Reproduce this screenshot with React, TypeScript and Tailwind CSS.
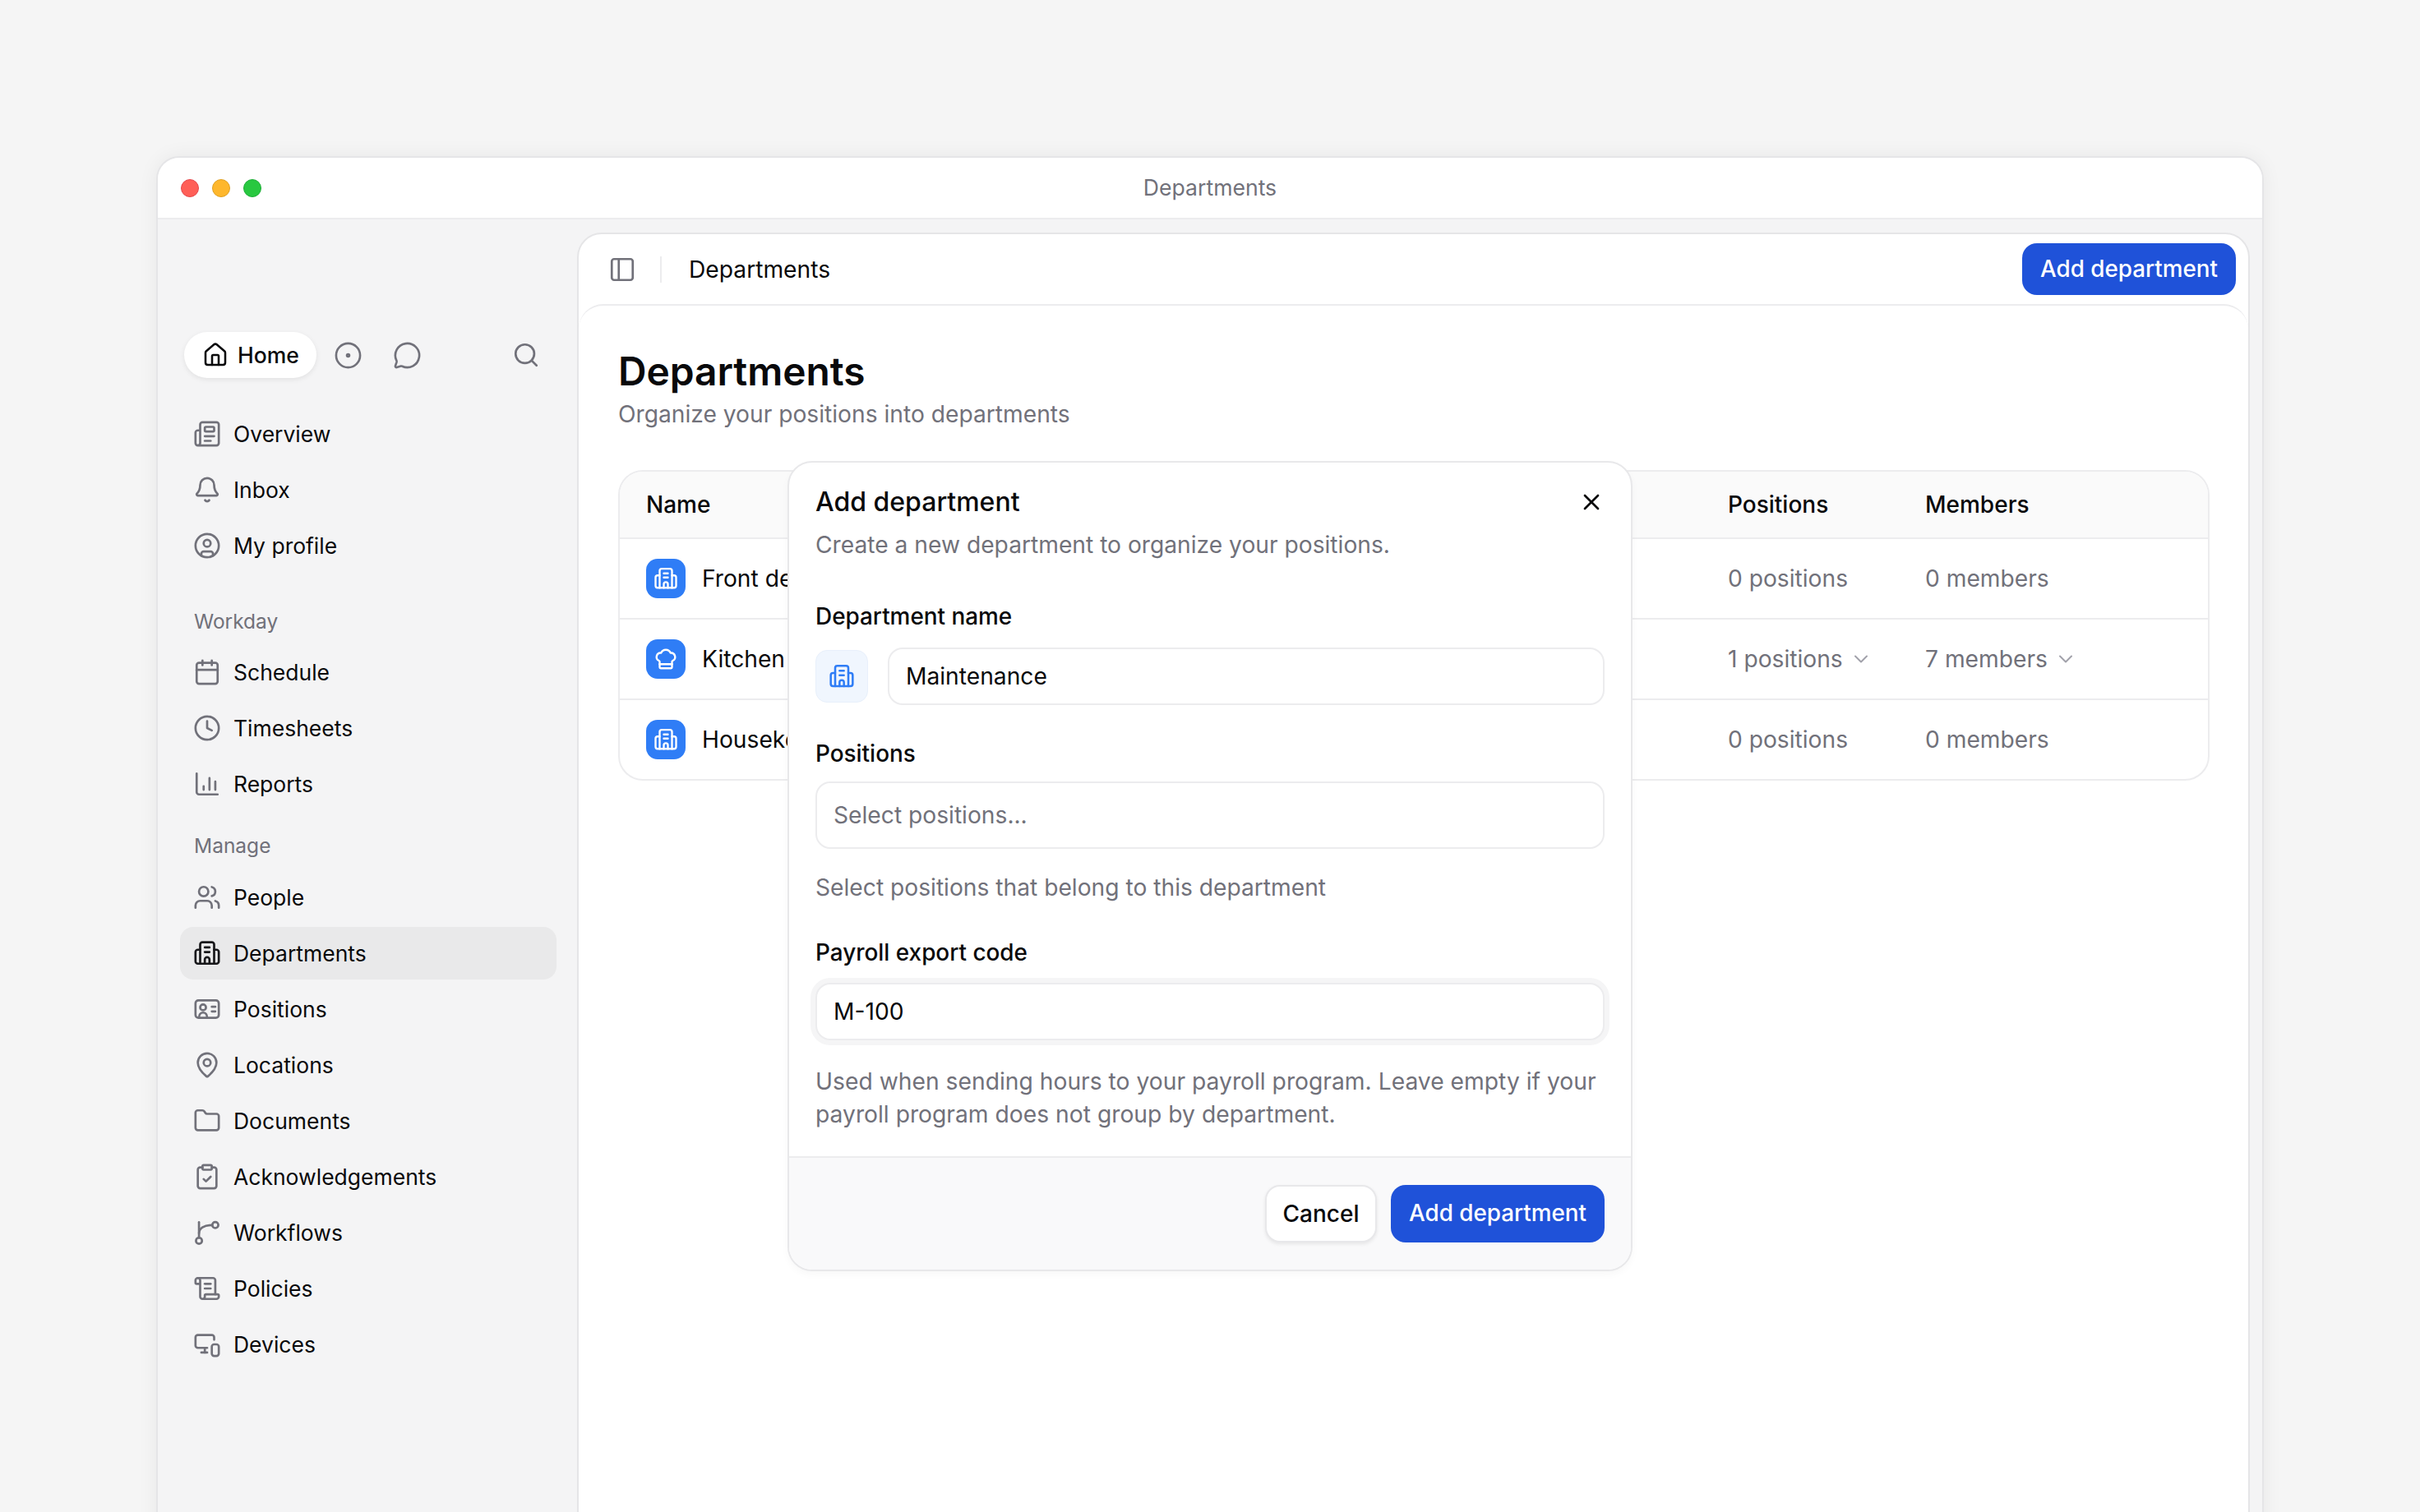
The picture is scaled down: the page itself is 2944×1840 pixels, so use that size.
import React from "react";
import {
  House, CircleDot, MessageCircle, Search, Newspaper, Bell, CircleUser, Calendar, Clock, Users,
  MapPin, Folder, ClipboardCheck, ScrollText, MonitorSmartphone, PanelLeft, X, ChevronDown, ChefHat,
} from "lucide-react";

type IconProps = { className?: string; strokeWidth?: number };

const Building = ({ className, strokeWidth = 2 }: IconProps) => (
  <svg viewBox="0 0 24 24" fill="none" stroke="currentColor" strokeWidth={strokeWidth} strokeLinecap="round" strokeLinejoin="round" className={className}>
    <path d="M6 21V4.500a2 2 0 0 1 2-2h8a2 2 0 0 1 2 2V21" />
    <path d="M6 9H4a2 2 0 0 0-2 2v8a2 2 0 0 0 2 2h16a2 2 0 0 0 2-2v-8a2 2 0 0 0-2-2h-2" />
    <path d="M10 21v-3.500a2 2 0 0 1 4 0V21" />
    <path d="M10 7h4M10 11h4" />
  </svg>
);

const Bars = ({ className, strokeWidth = 2 }: IconProps) => (
  <svg viewBox="0 0 24 24" fill="none" stroke="currentColor" strokeWidth={strokeWidth} strokeLinecap="round" strokeLinejoin="round" className={className}>
    <path d="M3 3v16a2 2 0 0 0 2 2h16" />
    <path d="M9 17v-3M14 17V7M19 17v-7" />
  </svg>
);

const Card = ({ className, strokeWidth = 2 }: IconProps) => (
  <svg viewBox="0 0 24 24" fill="none" stroke="currentColor" strokeWidth={strokeWidth} strokeLinecap="round" strokeLinejoin="round" className={className}>
    <rect x="2" y="4.500" width="20" height="15" rx="2.500" />
    <circle cx="8.500" cy="10.500" r="2.500" />
    <path d="M5 19.500c0-2.800 1.500-4.500 3.500-4.500s3.500 1.700 3.500 4.500" />
    <path d="M16 10h3M16 14h3" />
  </svg>
);

const Flow = ({ className, strokeWidth = 2 }: IconProps) => (
  <svg viewBox="0 0 24 24" fill="none" stroke="currentColor" strokeWidth={strokeWidth} strokeLinecap="round" strokeLinejoin="round" className={className}>
    <circle cx="5" cy="19" r="2.600" />
    <circle cx="19" cy="5.500" r="2.600" />
    <path d="M5 16.400V3" />
    <path d="M5 12.500c0-4 4-7 11.400-7" />
  </svg>
);

const side = "text-[#71717a]";

const Row = ({ icon: Icon, label, active }: { icon: React.ComponentType<IconProps>; label: string; active?: boolean }) => (
  <div className={`flex h-[64px] w-[458px] items-center gap-[15px] rounded-[16px] pl-[16px] ${active ? "bg-[#e9e9ea]" : ""}`}>
    <Icon className={`h-[34px] w-[34px] ${active ? "text-[#18181b]" : side}`} strokeWidth={1.9} />
    <span className="text-[26.500px] leading-none text-[#09090b]">{label}</span>
  </div>
);

const GroupLabel = ({ children, className }: { children: string; className: string }) => (
  <div className={`flex h-[40px] items-center pl-[17px] text-[24.500px] ${side} ${className}`}>{children}</div>
);

const Sidebar = () => (
  <aside className="w-[510px] shrink-0 pl-[27px] pt-[137px]">
    <div className="flex h-[56px] w-[456px] items-center pl-[5px]">
      <div className="flex h-[56px] w-[161px] items-center gap-[11px] rounded-full bg-white pl-[22px] shadow-[0_2px_6px_rgba(0,0,0,0.08)]">
        <House className="h-[32px] w-[32px] text-[#09090b]" strokeWidth={1.9} />
        <span className="text-[26.500px] font-[450] leading-none text-[#09090b]">Home</span>
      </div>
      <CircleDot className={`ml-[21px] h-[35px] w-[35px] ${side}`} strokeWidth={1.8} />
      <MessageCircle className={`ml-[37px] h-[35px] w-[35px] ${side}`} strokeWidth={1.8} />
      <Search className={`ml-auto mr-[18px] h-[34px] w-[34px] ${side}`} strokeWidth={1.9} />
    </div>
    <div className="mt-[36px] flex flex-col gap-[4px]">
      <Row icon={Newspaper} label="Overview" />
      <Row icon={Bell} label="Inbox" />
      <Row icon={CircleUser} label="My profile" />
    </div>
    <GroupLabel className="mb-[10px] mt-[40px]">Workday</GroupLabel>
    <div className="flex flex-col gap-[4px]">
      <Row icon={Calendar} label="Schedule" />
      <Row icon={Clock} label="Timesheets" />
      <Row icon={Bars} label="Reports" />
    </div>
    <GroupLabel className="mb-[11px] mt-[23px]">Manage</GroupLabel>
    <div className="flex flex-col gap-[4px]">
      <Row icon={Users} label="People" />
      <Row icon={Building} label="Departments" active />
      <Row icon={Card} label="Positions" />
      <Row icon={MapPin} label="Locations" />
      <Row icon={Folder} label="Documents" />
      <Row icon={ClipboardCheck} label="Acknowledgements" />
      <Row icon={Flow} label="Workflows" />
      <Row icon={ScrollText} label="Policies" />
      <Row icon={MonitorSmartphone} label="Devices" />
    </div>
  </aside>
);

const rows = [
  { name: "Front desk", icon: Building, pos: "0 positions", mem: "0 members", more: false },
  { name: "Kitchen", icon: ChefHat, pos: "1 positions", mem: "7 members", more: true },
  { name: "Housekeeping", icon: Building, pos: "0 positions", mem: "0 members", more: false },
];

const Table = () => (
  <div className="ml-[48px] mr-[47px] mt-[49px] overflow-hidden rounded-[30px] border-2 border-[#ececee]">
    <div className="flex h-[82px] items-center border-b-2 border-[#ececee] bg-[#fafafa] text-[28px] font-medium text-[#09090b]">
      <span className="w-[1348px] pl-[32px]">Name</span>
      <span className="w-[240px]">Positions</span>
      <span>Members</span>
    </div>
    {rows.map((r, i) => (
      <div key={r.name} className={`flex items-center text-[28.200px] ${i < 2 ? "h-[98px] border-b-2 border-[#ececee]" : "h-[96px]"}`}>
        <div className="flex w-[1348px] items-center gap-[20px] pl-[32px]">
          <div className="flex h-[48px] w-[48px] items-center justify-center rounded-[14px] bg-[#2f7df6]">
            <r.icon className="h-[30px] w-[30px] text-white" strokeWidth={1.9} />
          </div>
          <span className="text-[#09090b]">{r.name}</span>
        </div>
        <div className="flex w-[240px] items-center gap-[8px] text-[#71717a]">
          <span>{r.pos}</span>
          {r.more && <ChevronDown className="h-[28px] w-[28px] text-[#a1a1aa]" strokeWidth={1.7} />}
        </div>
        <div className="flex items-center gap-[8px] text-[#71717a]">
          <span>{r.mem}</span>
          {r.more && <ChevronDown className="h-[28px] w-[28px] text-[#a1a1aa]" strokeWidth={1.7} />}
        </div>
      </div>
    ))}
  </div>
);

const Dialog = () => (
  <div className="absolute left-[958px] top-[561px] w-[1028px] overflow-hidden rounded-[30px] border-2 border-[#e8e8ea] bg-white shadow-[0_4px_10px_rgba(0,0,0,0.03)]">
    <div className="px-[32px] pt-[28px]">
      <div className="flex h-[40px] items-center justify-between">
        <span className="text-[32px] font-medium leading-none text-[#09090b]">Add department</span>
        <X className="h-[32px] w-[32px] text-[#09090b]" strokeWidth={2} />
      </div>
      <p className="mt-[12px] text-[28.200px] leading-[40px] text-[#71717a]">Create a new department to organize your positions.</p>
      <label className="mt-[47px] block text-[27.900px] font-medium leading-[40px] text-[#09090b]">Department name</label>
      <div className="mt-[18px] flex items-center gap-[24px]">
        <div className="flex h-[64px] w-[64px] shrink-0 items-center justify-center rounded-[14px] border border-[#e8f0fb] bg-[#f0f6fe]">
          <Building className="h-[32px] w-[32px] text-[#2f7df6]" strokeWidth={1.9} />
        </div>
        <div className="flex h-[70px] flex-1 items-center rounded-[18px] border-2 border-[#ececee] pl-[20px] text-[28.200px] text-[#09090b]">Maintenance</div>
      </div>
      <label className="mt-[39px] block text-[27.900px] font-medium leading-[40px] text-[#09090b]">Positions</label>
      <div className="mt-[14px] flex h-[82px] items-center rounded-[18px] border-2 border-[#ececee] pl-[20px] text-[28.200px] text-[#71717a]">Select positions...</div>
      <p className="mt-[27px] text-[28.200px] leading-[40px] text-[#71717a]">Select positions that belong to this department</p>
      <label className="mt-[39px] block text-[27.900px] font-medium leading-[40px] text-[#09090b]">Payroll export code</label>
      <div className="mt-[17px] flex h-[70px] items-center rounded-[18px] border-2 border-[#ececee] bg-white pl-[20px] text-[28.200px] text-[#09090b] shadow-[0_0_0_6px_#f5f5f6]">M-100</div>
      <p className="mt-[30px] text-[28.250px] leading-[40px] text-[#71717a]">
        Used when sending hours to your payroll program. Leave empty if your payroll program does not group by department.
      </p>
    </div>
    <div className="mt-[31px] flex h-[138px] items-center justify-end gap-[17px] border-t-2 border-[#ececee] bg-[#f9f9fa] pr-[32px]">
      <button className="h-[70px] w-[136px] rounded-[18px] border-2 border-[#e8e8ea] bg-white text-[28px] font-medium text-[#09090b] shadow-[0_2px_4px_rgba(0,0,0,0.08)]">Cancel</button>
      <button className="h-[70px] w-[260px] rounded-[18px] bg-[#1f52d9] text-[27.800px] font-medium text-white">Add department</button>
    </div>
  </div>
);

export default function App() {
  return (
    <div className="relative h-[1840px] overflow-hidden bg-[#f5f5f5] px-[190px] pt-[190px] font-['Inter',sans-serif]">
      <div className="h-[1700px] overflow-hidden rounded-t-[28px] border-2 border-[#e5e5e7] bg-[#f4f4f5] shadow-[0_0_24px_rgba(0,0,0,0.06)]">
        <div className="grid h-[75px] grid-cols-3 items-center border-b-2 border-[#ececee] bg-white">
          <div className="flex items-center gap-[16px] pl-[28px]">
            <span className="h-[22px] w-[22px] rounded-full border border-[#e5484d] bg-[#ff5f57]" />
            <span className="h-[22px] w-[22px] rounded-full border border-[#dfa123] bg-[#feb72c]" />
            <span className="h-[22px] w-[22px] rounded-full border border-[#1fae38] bg-[#28c840]" />
          </div>
          <div className="text-center text-[26.600px] text-[#71717a]">Departments</div>
          <div />
        </div>
        <div className="flex">
          <Sidebar />
          <div className="mr-[15px] mt-[16px] h-[1600px] flex-1 rounded-t-[30px] border-2 border-[#e5e5e7] bg-white">
            <div className="flex h-[85px] items-center pl-[36px] pr-[15px]">
              <PanelLeft className="h-[34px] w-[34px] text-[#71717a]" strokeWidth={1.9} />
              <div className="ml-[29px] h-[32px] w-[2px] bg-[#ececee]" />
              <span className="ml-[33px] pt-[2px] text-[28.200px] text-[#09090b]">Departments</span>
              <button className="ml-auto h-[63px] w-[260px] rounded-[18px] bg-[#1f52d9] text-[27.800px] font-medium text-white">Add department</button>
            </div>
            <div className="h-[1500px] rounded-t-[30px] border-t-2 border-[#ececee]">
              <h1 className="pl-[48px] pt-[51px] text-[47.800px] font-semibold leading-[58px] text-[#09090b]">Departments</h1>
              <p className="mt-[3px] pl-[48px] text-[28.200px] leading-[40px] text-[#71717a]">Organize your positions into departments</p>
              <div className="-mt-[1px]">
                <Table />
              </div>
            </div>
          </div>
        </div>
      </div>
      <Dialog />
    </div>
  );
}
